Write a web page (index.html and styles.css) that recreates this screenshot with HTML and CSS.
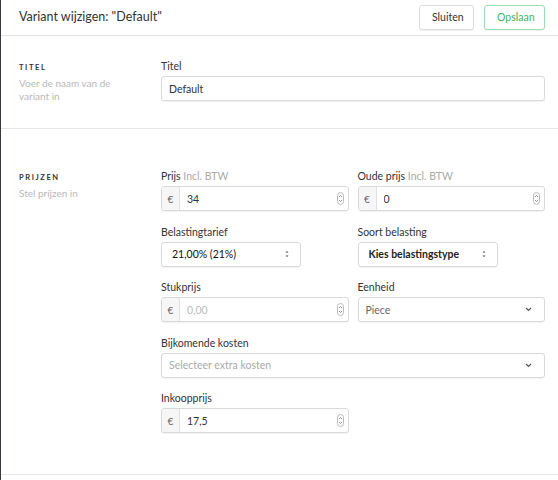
FILE: index.html
```html
<!DOCTYPE html>
<html lang="nl">
<head>
    <meta charset="UTF-8">
    <meta name="viewport" content="width=device-width, initial-scale=1.0">
    <title>Variant wijzigen</title>
    <link rel="stylesheet" href="styles.css">
</head>
<body>
    <div class="modal">
        <header class="modal-header">
            <h1>Variant wijzigen: "Default"</h1>
            <div class="actions">
                <button class="btn">Sluiten</button>
                <button class="btn btn-save">Opslaan</button>
            </div>
        </header>

        <section class="form-section section-top">
            <div class="section-info">
                <h2>Titel</h2>
                <p>Voer de naam van de variant in</p>
            </div>
            <div class="fields">
                <div class="field full">
                    <label>Titel</label>
                    <div class="control">
                        <input type="text" value="Default">
                    </div>
                </div>
            </div>
        </section>

        <section class="form-section section-prices">
            <div class="section-info">
                <h2>Prijzen</h2>
                <p>Stel prijzen in</p>
            </div>
            <div class="fields">
                <div class="field">
                    <label>Prijs <span class="hint">Incl. BTW</span></label>
                    <div class="control">
                        <span class="addon">€</span>
                        <input type="text" value="34">
                        <span class="spin"><svg width="7" height="13" viewBox="0 0 7 13"><rect x="0.5" y="0.5" width="6" height="12" rx="3" fill="#fff" stroke="#bbb"/><path d="M2 5 L3.5 3.5 L5 5 M2 8 L3.5 9.5 L5 8" fill="none" stroke="#777" stroke-width="0.8"/></svg></span>
                    </div>
                </div>
                <div class="field">
                    <label>Oude prijs <span class="hint">Incl. BTW</span></label>
                    <div class="control">
                        <span class="addon">€</span>
                        <input type="text" value="0">
                        <span class="spin"><svg width="7" height="13" viewBox="0 0 7 13"><rect x="0.5" y="0.5" width="6" height="12" rx="3" fill="#fff" stroke="#bbb"/><path d="M2 5 L3.5 3.5 L5 5 M2 8 L3.5 9.5 L5 8" fill="none" stroke="#777" stroke-width="0.8"/></svg></span>
                    </div>
                </div>

                <div class="field">
                    <label>Belastingtarief</label>
                    <div class="control select native">
                        <span class="value">21,00% (21%)</span>
                        <svg width="4" height="8" viewBox="0 0 4 8"><path d="M0.5 2.5 L2 1 L3.5 2.5 Z M0.5 5.5 L2 7 L3.5 5.5 Z" fill="#444"/></svg>
                    </div>
                </div>
                <div class="field">
                    <label>Soort belasting</label>
                    <div class="control select native">
                        <span class="value strong">Kies belastingstype</span>
                        <svg width="4" height="8" viewBox="0 0 4 8"><path d="M0.5 2.5 L2 1 L3.5 2.5 Z M0.5 5.5 L2 7 L3.5 5.5 Z" fill="#444"/></svg>
                    </div>
                </div>

                <div class="field">
                    <label>Stukprijs</label>
                    <div class="control">
                        <span class="addon">€</span>
                        <input type="text" placeholder="0,00">
                        <span class="spin"><svg width="7" height="13" viewBox="0 0 7 13"><rect x="0.5" y="0.5" width="6" height="12" rx="3" fill="#fff" stroke="#bbb"/><path d="M2 5 L3.5 3.5 L5 5 M2 8 L3.5 9.5 L5 8" fill="none" stroke="#777" stroke-width="0.8"/></svg></span>
                    </div>
                </div>
                <div class="field">
                    <label>Eenheid</label>
                    <div class="control select">
                        <span class="value muted">Piece</span>
                        <svg width="7" height="5" viewBox="0 0 7 5"><path d="M1 1 L3.5 3.5 L6 1" fill="none" stroke="#555" stroke-width="1.2"/></svg>
                    </div>
                </div>

                <div class="field full">
                    <label>Bijkomende kosten</label>
                    <div class="control select">
                        <span class="value placeholder">Selecteer extra kosten</span>
                        <svg width="7" height="5" viewBox="0 0 7 5"><path d="M1 1 L3.5 3.5 L6 1" fill="none" stroke="#555" stroke-width="1.2"/></svg>
                    </div>
                </div>

                <div class="field">
                    <label>Inkoopprijs</label>
                    <div class="control">
                        <span class="addon">€</span>
                        <input type="text" value="17,5">
                        <span class="spin"><svg width="7" height="13" viewBox="0 0 7 13"><rect x="0.5" y="0.5" width="6" height="12" rx="3" fill="#fff" stroke="#bbb"/><path d="M2 5 L3.5 3.5 L5 5 M2 8 L3.5 9.5 L5 8" fill="none" stroke="#777" stroke-width="0.8"/></svg></span>
                    </div>
                </div>
            </div>
        </section>
    </div>
</body>
</html>
```

FILE: styles.css
```css
* { box-sizing: border-box; margin: 0; padding: 0; }
body {
    font-family: 'Lato', 'Noto Sans', sans-serif;
    color: #333;
    background: #fff;
}
.modal {
    min-height: 480px;
    border-left: 1px solid #353a45;
}

/* header */
.modal-header {
    height: 36px;
    display: flex;
    align-items: center;
    justify-content: space-between;
    padding: 0 13px 0 18px;
    border-bottom: 1px solid #e3e3e3;
}
.modal-header h1 { font-size: 12.5px; font-weight: 400; color: #333; margin-top: -2px; }
.actions { display: flex; gap: 10px; margin-top: -1px; }
.btn {
    height: 25px;
    padding: 0 12px;
    font-family: inherit;
    font-size: 10.5px;
    color: #333;
    background: #fff;
    border: 1px solid #dcdcdc;
    border-radius: 3px;
    box-shadow: 0 1px 1px rgba(0,0,0,0.06);
}
.btn-save { color: #3bb565; border-color: #9edcb2; padding: 0 12px; width: 61px; }
.btn:first-child { width: 55px; }

/* sections */
.form-section {
    display: grid;
    grid-template-columns: 142px 1fr;
    padding: 0 13px 0 18px;
    border-bottom: 1px solid #e6e6e6;
}
.section-top { padding-top: 23px; padding-bottom: 25px; }
.section-prices { padding-top: 40px; padding-bottom: 41px; }
.section-info { padding-top: 3px; }
.section-info h2 {
    font-size: 7.5px;
    font-weight: 700;
    letter-spacing: 1.6px;
    text-transform: uppercase;
    color: #333;
    line-height: 12px;
}
.section-info p {
    margin-top: 3px;
    max-width: 112px;
    font-size: 10px;
    line-height: 13px;
    color: #b8b8b8;
}

/* fields */
.fields {
    display: grid;
    grid-template-columns: 1fr 1fr;
    column-gap: 9px;
    row-gap: 13.5px;
}
.field.full { grid-column: 1 / -1; }
.field label {
    display: block;
    font-size: 10.5px;
    line-height: 14px;
    margin-bottom: 3px;
    color: #333;
}
.hint { color: #aaa; }
.control {
    height: 25px;
    display: flex;
    align-items: center;
    border: 1px solid #d9d9d9;
    border-radius: 3px;
    background: #fff;
    box-shadow: 0 1px 1px rgba(0,0,0,0.05);
    overflow: hidden;
}
.control input {
    flex: 1;
    min-width: 0;
    height: 100%;
    border: none;
    outline: none;
    padding: 0 7px;
    font-family: inherit;
    font-size: 10.5px;
    color: #333;
    background: transparent;
}
.control input::placeholder { color: #bbb; }
.addon {
    width: 18px;
    height: 100%;
    display: flex;
    align-items: center;
    justify-content: center;
    flex-shrink: 0;
    background: #f6f6f6;
    border-right: 1px solid #e0e0e0;
    font-size: 10px;
    color: #666;
}
.spin { display: flex; margin-right: 4px; }
.select { justify-content: space-between; padding: 0 12px 0 7px; }
.select .value { font-size: 10.5px; color: #333; }
.select.native { width: 140px; padding: 0 11px 0 10px; }
.select.native .value { color: #111; font-size: 10.5px; }
.select.native .value.strong { font-weight: 700; color: #222; }
.value.muted { color: #666; }
.value.placeholder { color: #aaa; }
```
